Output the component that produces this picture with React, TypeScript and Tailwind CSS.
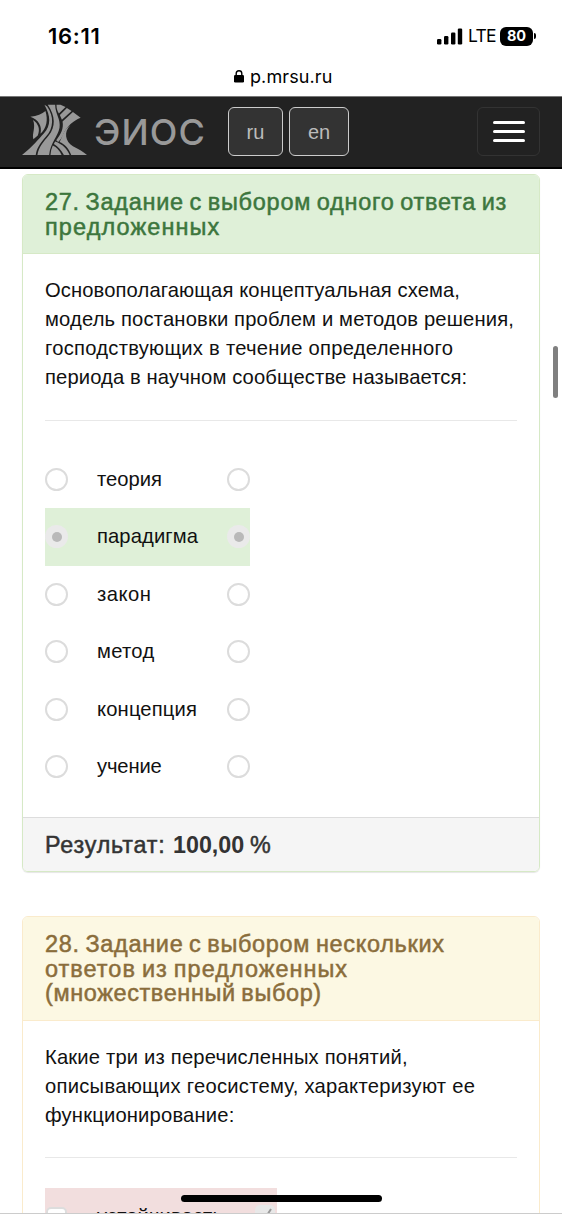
import clsx from "clsx";

type Line = { text: string; spacing: string };

const answers = [
  { label: "теория", spacing: "tracking-[0px]" },
  { label: "парадигма", spacing: "tracking-[0.1px]", correct: true },
  { label: "закон", spacing: "tracking-[0.5px]" },
  { label: "метод", spacing: "tracking-[0.3px]" },
  { label: "концепция", spacing: "tracking-[0.15px]" },
  { label: "учение", spacing: "tracking-[-0.15px]" },
];

const title27: Line[] = [
  { text: "27. Задание с выбором одного ответа из", spacing: "tracking-[0.72px]" },
  { text: "предложенных", spacing: "tracking-[1.1px]" },
];

const question27: Line[] = [
  { text: "Основополагающая концептуальная схема,", spacing: "tracking-[0.11px]" },
  { text: "модель постановки проблем и методов решения,", spacing: "tracking-[0.16px]" },
  { text: "господствующих в течение определенного", spacing: "tracking-[0.26px]" },
  { text: "периода в научном сообществе называется:", spacing: "tracking-[0.12px]" },
];

const title28: Line[] = [
  { text: "28. Задание с выбором нескольких", spacing: "tracking-[0.68px]" },
  { text: "ответов из предложенных", spacing: "tracking-[1px]" },
  { text: "(множественный выбор)", spacing: "tracking-[0.6px]" },
];

const question28: Line[] = [
  { text: "Какие три из перечисленных понятий,", spacing: "tracking-[0.18px]" },
  { text: "описывающих геосистему, характеризуют ее", spacing: "tracking-[0.27px]" },
  { text: "функционирование:", spacing: "tracking-[0.18px]" },
];

function Lines({ lines }: { lines: Line[] }) {
  return lines.map(({ text, spacing }) => (
    <span key={text} className={clsx("block whitespace-nowrap", spacing)}>{text}</span>
  ));
}

function StatusBar() {
  return (
    <div className="flex h-[62px] items-start justify-between pr-[26px] pl-[48px] pt-[22px] text-black">
      <span className="font-[Inter] text-[22px] leading-[28px] font-semibold tracking-[0.7px]">16:11</span>
      <div className="flex h-[28px] items-center">
        <svg className="h-[17px] w-[26px]" viewBox="0 0 26 17">
          <rect x="0" y="11" width="4.4" height="5.5" rx="1.2" />
          <rect x="7" y="8" width="4.4" height="8.5" rx="1.2" />
          <rect x="14" y="4.5" width="4.4" height="12" rx="1.2" />
          <rect x="20.8" y="0.5" width="4.4" height="16" rx="1.2" />
        </svg>
        <span className="ml-[5px] w-[27px] font-[Inter] text-[17.5px] tracking-[-0.8px]">LTE</span>
        <div className="ml-[5px] grid h-[19px] w-[33px] place-items-center rounded-[6px] bg-black font-[Inter] text-[14.5px] leading-none font-bold text-white">80</div>
        <div className="ml-[1px] h-[6px] w-[2px] rounded-r-full bg-black" />
      </div>
    </div>
  );
}

function AddressBar() {
  return (
    <div className="flex h-[34px] items-start pt-[4px] pl-[234px] text-black">
      <svg className="mt-[4px] h-[13px] w-[10px]" viewBox="0 0 10 13">
        <rect x="0" y="5" width="10" height="7.5" rx="1.3" />
        <path d="M2.2 6V3.5a2.8 2.8 0 0 1 5.6 0V6" fill="none" stroke="black" strokeWidth="1.4" />
      </svg>
      <span className="ml-[6px] font-[Inter] text-[18px] leading-[22px] tracking-[0.1px]">p.mrsu.ru</span>
    </div>
  );
}

function Logo() {
  return (
    <svg className="h-[51px] w-[65px]" viewBox="65 314 194 152" fill="#999">
      <path d="M65 466C98 440 115 418 130 402C152 377 151 350 132 316L140 321C161 350 160 386 136 412C116 435 109 448 106 466Z" />
      <path d="M111 466C115 442 130 426 144 409C166 382 165 350 142 316H164C164 344 181 358 177 385C172 411 150 430 146 466Z" />
      <path d="M90 352C110 350 125 344 135 335C143 362 139 385 120 403C126 380 114 360 90 352Z" />
      <path d="M98 362C114 373 120 390 112 408L99 419C94 403 107 385 98 362Z" />
      <path d="M168 316H180L195 323L175 342C170 333 168 328 168 316Z" />
      <path d="M199 326L213 335L184 361L178 347Z" />
      <path d="M217 338L240 355C222 362 196 381 187 408Q181 421 173 427L167 422C181 404 190 387 186 366Z" />
      <path d="M164 426C186 434 200 448 207 466H190C182 450 172 440 160 433Z" />
      <path d="M157 438Q174 446 183 466H150Q151 450 157 438Z" />
      <path d="M209 377C189 397 194 425 217 440C235 449 248 457 259 466H212C205 446 192 433 177 427C188 408 187 393 209 377Z" />
    </svg>
  );
}

function Navbar() {
  return (
    <header className="flex h-[73px] items-start border-t border-b-2 border-t-[#777] border-b-black bg-[#222] pr-[22px] pl-[22px]">
      <div className="mt-[7px]"><Logo /></div>
      <span className="mt-[14px] ml-[7px] w-[112px] font-[Inter] text-[36px] leading-[42px] font-medium tracking-[1.1px] whitespace-nowrap text-[#999]">ЭИОС</span>
      <button className="mt-[10px] ml-[22px] h-[49px] w-[55px] rounded-[6px] border-[1.5px] border-[#ccc] bg-[#333] font-['Liberation_Sans'] text-[20px] text-[#bbb]">ru</button>
      <button className="mt-[10px] ml-[6px] h-[49px] w-[60px] rounded-[6px] border-[1.5px] border-[#ccc] bg-[#333] font-['Liberation_Sans'] text-[20px] text-[#bbb]">en</button>
      <button className="mt-[10px] ml-auto flex h-[49px] w-[63px] flex-col items-center justify-center gap-[6px] rounded-[6px] border border-[#333]">
        <span className="h-[3px] w-[32px] rounded-sm bg-white" />
        <span className="h-[3px] w-[32px] rounded-sm bg-white" />
        <span className="h-[3px] w-[32px] rounded-sm bg-white" />
      </button>
    </header>
  );
}

function Radio({ checked }: { checked?: boolean }) {
  return (
    <span className={clsx("grid size-[23px] place-items-center rounded-full", checked ? "bg-[#eaeaea]" : "border-2 border-[#dcdcdc] bg-white")}>
      {checked && <span className="size-[10px] rounded-full bg-[#b9b9b9]" />}
    </span>
  );
}

export default function App() {
  return (
    <div className="relative h-[1214px] w-[562px] overflow-hidden bg-white">
      <StatusBar />
      <AddressBar />
      <Navbar />
      <main className="px-[22px] pt-[5px] font-['Liberation_Sans',sans-serif] text-[20.2px] leading-[28.8px] text-[#111]">
        <section className="h-[698px] rounded-[6px] border border-[#d6e9c6] shadow-[0_1px_1px_rgba(0,0,0,0.1)]">
          <h3 className="h-[79px] rounded-t-[5px] border-b border-[#d6e9c6] bg-[#dff0d8] pt-[15px] pl-[22px] text-[23.5px] leading-[24.5px] [word-spacing:-1.5px] text-[#3c763d] [-webkit-text-stroke:0.5px_#3c763d]">
            <Lines lines={title27} />
          </h3>
          <div className="h-[563px] px-[22px] pt-[22.4px]">
            <p><Lines lines={question27} /></p>
            <hr className="mt-[28px] border-t border-[#e8e8e8]" />
            <div className="mt-[30px] w-[205px]">
              {answers.map(({ label, spacing, correct }) => (
                <label key={label} className={clsx("flex h-[57.5px] items-center", correct && "bg-[#dff0d8]")}>
                  <Radio checked={correct} />
                  <span className={clsx("ml-[29px] flex-1 whitespace-nowrap", spacing)}>{label}</span>
                  <Radio checked={correct} />
                </label>
              ))}
            </div>
          </div>
          <footer className="flex h-[54px] items-center rounded-b-[5px] border-t border-[#ddd] bg-[#f5f5f5] pt-[2px] pl-[22px] text-[23.3px] text-[#333]">
            <span className="w-[128px] tracking-[0.8px] [-webkit-text-stroke:0.5px_#333]">Результат:</span>
            <b className="w-[77px] tracking-[0px]">100,00</b>
            <span className="[-webkit-text-stroke:0.5px_#333]">%</span>
          </footer>
        </section>
        <section className="mt-[44px] h-[400px] rounded-[6px] border border-[#faebcc]">
          <h3 className="h-[104px] rounded-t-[5px] border-b border-[#faebcc] bg-[#fcf8e3] pt-[15px] pl-[22px] text-[23.5px] leading-[24.5px] [word-spacing:-1.5px] text-[#8a6d3b] [-webkit-text-stroke:0.5px_#8a6d3b]">
            <Lines lines={title28} />
          </h3>
          <div className="px-[22px] pt-[22px]">
            <p><Lines lines={question28} /></p>
            <hr className="mt-[28px] border-t border-[#e8e8e8]" />
            <label className="mt-[30px] flex h-[57px] w-[232px] items-start bg-[#f2dede]">
              <span className="mt-[19px] ml-[1px] h-[20px] w-[21px] rounded-[5px] border-2 border-[#ddd] bg-white" />
              <span className="mt-[14px] ml-[30px] flex-1 tracking-[0.1px]">устойчивость</span>
              <span className="mt-[17px] mr-[2px] grid size-[20px] place-items-center rounded-[5px] bg-[#e8e8e8]">
                <svg className="size-[16px]" viewBox="0 0 16 16" fill="none" stroke="#999" strokeWidth="2">
                  <path d="M3 9l4 4 7-11" />
                </svg>
              </span>
            </label>
          </div>
        </section>
      </main>
      <div className="absolute top-[346px] right-[4px] h-[52px] w-[5px] rounded-full bg-[#808080]" />
      <div className="absolute bottom-0 left-0 h-[1px] w-full bg-[#ccc]" />
      <div className="absolute top-[1195px] left-[181px] h-[7px] w-[201px] rounded-full bg-black" />
    </div>
  );
}
